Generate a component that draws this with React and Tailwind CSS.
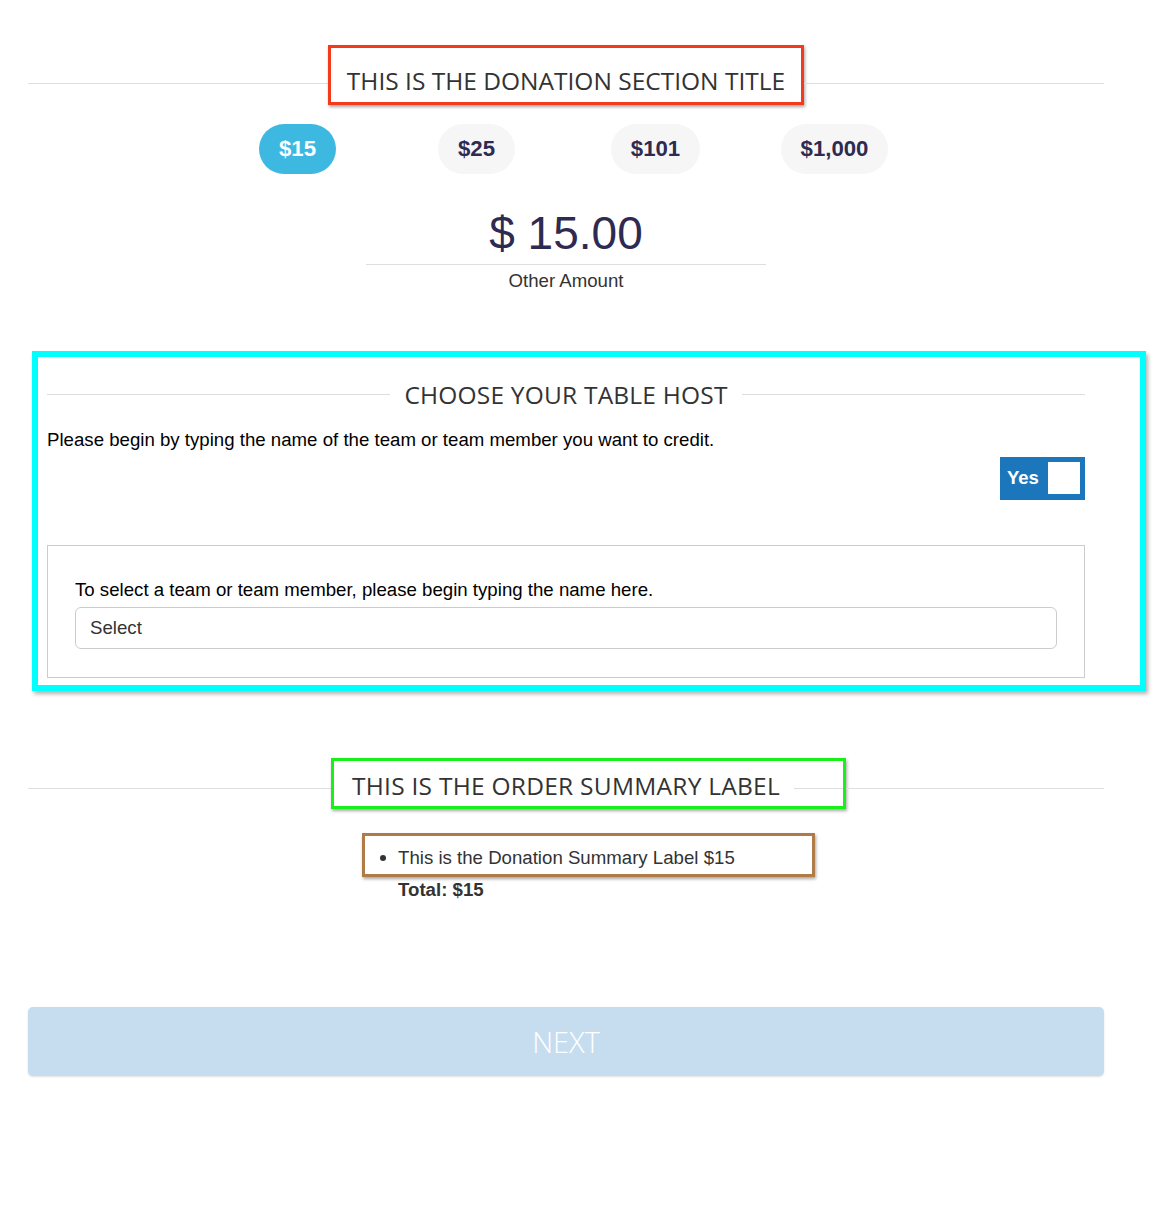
const heading = "font-['Open_Sans',sans-serif] text-[24.5px] leading-none text-[#333]";
const body = "text-[18.65px] leading-none";

const amounts = ["$15", "$25", "$101", "$1,000"];

function Line({ className = "" }) {
  return <div className={`h-px bg-[#dedede] ${className}`} />;
}

export default function App() {
  return (
    <div className="min-h-[1226px] bg-white font-['Liberation_Sans',Arial,sans-serif] text-[#222]">
      <div className="ml-[28px] w-[1076px] pt-[45px]">
        {/* donation title */}
        <div className="flex items-start">
          <Line className="mt-[38px] flex-1" />
          <div className="h-[60px] border-[3px] border-[#f33b1b] px-[16px] pt-[21px] shadow-[1px_2px_3px_rgba(0,0,0,0.35)]">
            <h2 className={heading}>THIS IS THE DONATION SECTION TITLE</h2>
          </div>
          <Line className="mt-[38px] flex-1" />
        </div>

        {/* amount buttons */}
        <div className="mx-auto mt-[19px] grid w-[716px] grid-cols-4 justify-items-center">
          {amounts.map((a, i) => (
            <button
              key={a}
              className={`h-[50px] rounded-full px-5 text-[22.2px] font-bold ${
                i === 0 ? "bg-[#3db8e1] text-white" : "bg-[#f6f6f7] text-[#2e2b50]"
              }`}
            >
              {a}
            </button>
          ))}
        </div>

        {/* other amount */}
        <div className="mx-auto mt-[36px] w-[400px] border-b border-[#dedede] pb-[8px] text-center text-[46px] leading-none text-[#2e2b52]">
          $ 15.00
        </div>
        <p className={`mt-[7px] text-center text-[#333] ${body}`}>Other Amount</p>

        {/* table host */}
        <div className="ml-[4px] mt-[60px] w-[1114px] border-[6px] border-[#00ffff] pb-[7px] pl-[9px] pr-[55px] pt-[26px] shadow-[2px_3px_4px_rgba(0,0,0,0.3)]">
          <div className="flex items-center">
            <Line className="flex-1" />
            <h3 className={`px-[14px] tracking-[0.2px] ${heading}`}>CHOOSE YOUR TABLE HOST</h3>
            <Line className="flex-1" />
          </div>
          <p className={`mt-[24px] text-black ${body}`}>
            Please begin by typing the name of the team or team member you want to credit.
          </p>
          <div className="mt-[7px] flex justify-end">
            <div className="flex h-[43px] w-[85px] items-center bg-[#1b76bc] pl-[7px] pr-[5px]">
              <span className="text-[18.5px] font-bold text-white">Yes</span>
              <span className="ml-auto h-[32px] w-[32px] bg-white" />
            </div>
          </div>
          <div className="mt-[45px] border border-[#cccccc] px-[27px] pb-[28px] pt-[35px]">
            <p className={`text-black ${body}`}>To select a team or team member, please begin typing the name here.</p>
            <div className="mt-[8px] flex h-[42px] items-center rounded-[6px] border border-[#cccccc] pl-[14px]">
              <span className={`text-[#333] ${body}`}>Select</span>
            </div>
          </div>
        </div>

        {/* order summary */}
        <div className="mt-[67px] flex items-start">
          <Line className="mt-[30px] w-[303px]" />
          <div className="flex h-[51px] w-[515px] items-start border-[3px] border-[#1aef1a] pl-[18px] pt-[13px] shadow-[1px_2px_3px_rgba(0,0,0,0.35)]">
            <h3 className={`tracking-[0.26px] ${heading}`}>THIS IS THE ORDER SUMMARY LABEL</h3>
            <Line className="ml-[14px] mt-[14px] flex-1" />
          </div>
          <Line className="mt-[30px] flex-1" />
        </div>

        <div className="ml-[334px] mt-[24px] flex h-[44px] w-[453px] items-start border-[3px] border-[#b17b48] pl-[15px] pt-[13px] shadow-[1px_2px_3px_rgba(0,0,0,0.35)]">
          <span className="mt-[6px] h-[6px] w-[6px] rounded-full bg-[#333]" />
          <span className={`ml-[12px] text-[#333] ${body}`}>This is the Donation Summary Label $15</span>
        </div>
        <p className={`ml-[370px] mt-[4px] font-bold text-[#333] ${body}`}>Total: $15</p>

        <button className="mt-[107px] flex h-[69px] w-full items-center justify-center rounded-[5px] bg-[#c6ddf0] shadow-[0_1px_2px_rgba(0,0,0,0.12)]">
          <span className="font-['Open_Sans',sans-serif] text-[29px] font-light leading-none text-white">NEXT</span>
        </button>
      </div>
    </div>
  );
}
